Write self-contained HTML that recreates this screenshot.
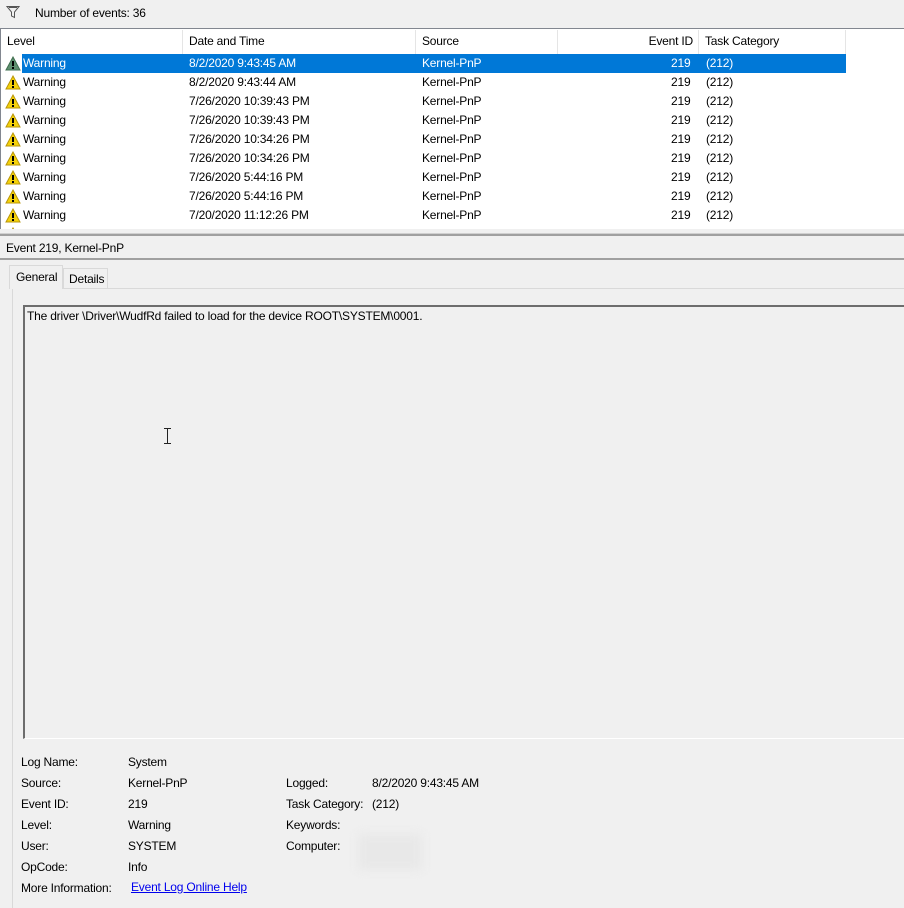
<!DOCTYPE html>
<html><head><style>
*{margin:0;padding:0;box-sizing:border-box}
body{width:904px;height:908px;background:#f0f0f0;font-family:"Liberation Sans",sans-serif;font-size:12px;letter-spacing:-0.2px;color:#000;position:relative;overflow:hidden}
.a{position:absolute;white-space:nowrap}
.list{position:absolute;left:0;top:28px;width:904px;height:201px;background:#fff;border-top:1px solid #828790;border-left:1px solid #828790;overflow:hidden}
.hd{position:absolute;top:1px;height:24px;line-height:23px;border-right:1px solid #e5e5e5;padding-left:6px;color:#000}
.row{position:absolute;left:0;height:19px;width:845px;line-height:19px}
.row span{position:absolute}
</style></head><body>
<svg class="a" style="left:6px;top:5px" width="14" height="14" viewBox="0 0 14 14"><path d="M1 1.5H13L8.5 7V12.5L5.5 11V7Z" fill="none" stroke="#555" stroke-width="1"/><path d="M3 2.5H11" stroke="#555"/></svg>
<div class="a" style="left:35px;top:6px">Number of events: 36</div>
<div class="list">
<div class="hd" style="left:0;width:182px">Level</div>
<div class="hd" style="left:182px;width:233px">Date and Time</div>
<div class="hd" style="left:415px;width:142px">Source</div>
<div class="hd" style="left:557px;width:141px;text-align:right;padding-right:5px">Event ID</div>
<div class="hd" style="left:698px;width:147px">Task Category</div>
<div id="rows"></div>
</div>
<div class="a" style="left:0;top:233px;width:904px;height:3px;background:#a0a0a0;border-top:1px solid #d0d0d0"></div>
<div class="a" style="left:6px;top:241px">Event 219, Kernel-PnP</div>
<div class="a" style="left:0;top:258px;width:904px;height:2px;background:#a0a0a0"></div>
<div class="a" style="left:12px;top:288px;width:892px;height:620px;background:#f0f0f0;border:1px solid #d9d9d9;border-right:none;border-bottom:none"></div>
<div class="a" style="left:63px;top:268px;width:45px;height:21px;border:1px solid #d9d9d9;border-bottom:none;padding:3px 0 0 5px">Details</div>
<div class="a" style="left:9px;top:265px;width:54px;height:24px;background:#f0f0f0;border:1px solid #d9d9d9;border-bottom:none;padding:4px 0 0 6px">General</div>
<div class="a" style="left:23px;top:305px;width:881px;height:434px;border-top:2px solid #6d6d6d;border-left:2px solid #6d6d6d;border-bottom:1px solid #fff"></div>
<div class="a" style="left:27px;top:309px">The driver \Driver\WudfRd failed to load for the device ROOT\SYSTEM\0001.</div>
<svg class="a" style="left:163px;top:428px" width="9" height="16" viewBox="0 0 9 16"><path d="M1 .5H8M1 15.5H8M4.5 1V15" stroke="#222" stroke-width="1" fill="none"/></svg>
<div class="a" style="left:21px;top:752px;line-height:21px">Log Name:<br>Source:<br>Event ID:<br>Level:<br>User:<br>OpCode:<br>More Information:</div>
<div class="a" style="left:128px;top:752px;line-height:21px">System<br>Kernel-PnP<br>219<br>Warning<br>SYSTEM<br>Info</div>
<div class="a" style="left:131px;top:880px;color:#0000ee;text-decoration:underline">Event Log Online Help</div>
<div class="a" style="left:286px;top:773px;line-height:21px">Logged:<br>Task Category:<br>Keywords:<br>Computer:</div>
<div class="a" style="left:372px;top:773px;line-height:21px">8/2/2020 9:43:45 AM<br>(212)</div>
<div class="a" style="left:358px;top:834px;width:64px;height:36px;background:#e8e8e8;filter:blur(5px)"></div>
<script>
var d=["8/2/2020 9:43:45 AM","8/2/2020 9:43:44 AM","7/26/2020 10:39:43 PM","7/26/2020 10:39:43 PM","7/26/2020 10:34:26 PM","7/26/2020 10:34:26 PM","7/26/2020 5:44:16 PM","7/26/2020 5:44:16 PM","7/20/2020 11:12:26 PM"];
var h="";
d.forEach(function(r,i){var t=25+i*19;var s=i==0;
var c=s?"#5f8f6f":"#f5d20a";
h+='<svg style="position:absolute;left:4px;top:'+(t+2)+'px" width="16" height="15" viewBox="0 0 16 15"><path d="M8 1L15 14H1Z" fill="'+c+'" stroke="'+(s?"#3f6f4f":"#b8960a")+'"/><rect x="7" y="5" width="2" height="5" fill="#000"/><rect x="7" y="11" width="2" height="2" fill="#000"/></svg>';
var col=s?'color:#fff':'';
h+='<div class="row" style="top:'+t+'px"><div style="position:absolute;left:21px;top:0;width:824px;height:19px;'+(s?'background:#0078d7':'')+'"></div>'+
'<span style="left:22px;'+col+'">Warning</span><span style="left:188px;'+col+'">'+r+'</span><span style="left:421px;'+col+'">Kernel-PnP</span><span style="left:670px;'+col+'">219</span><span style="left:705px;'+col+'">(212)</span></div>';});
h+='<svg style="position:absolute;left:4px;top:198px" width="16" height="15" viewBox="0 0 16 15"><path d="M8 1L15 14H1Z" fill="#f5d20a" stroke="#b8960a"/></svg>';
document.getElementById("rows").innerHTML=h;
</script>
</body></html>
